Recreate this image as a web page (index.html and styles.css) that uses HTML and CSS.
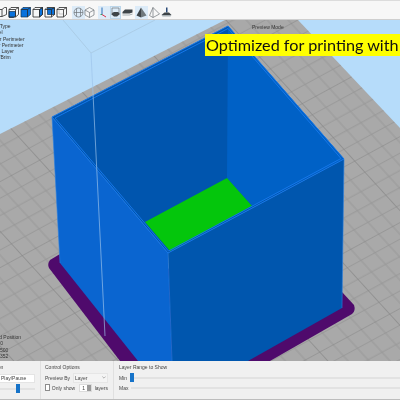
FILE: index.html
```html
<!DOCTYPE html>
<html>
<head>
    <meta charset="utf-8"/>
    <title>Preview Mode</title>
    <link rel="stylesheet" href="styles.css">
</head>
<body>
    <div class="app">
        <!-- toolbar -->
        <div class="toolbar">
            <svg class="tool-icon first" viewBox="0 0 11 11"><path class="line" d="M-4 2.500h10v7h-10zM6 2.500l2.500-2h2v7l-4.500 2"/></svg>
            <svg class="tool-icon" viewBox="0 0 11 11"><path class="face" d="M1 4.500h6.500v4.500l-2 1.500h-4.500z"/><path class="line" d="M1 2.500l2-2h7.500v7l-3 2.500h-6.500zM1 2.500h6.500v7.500M7.500 2.500l3-2"/></svg>
            <svg class="tool-icon" viewBox="0 0 11 11"><path class="face" d="M1 2.500l2-2h7.500v7l-3 2.500h-6.500z"/><path class="line" d="M1 2.500h6.500v7.500M7.500 2.500l3-2"/></svg>
            <svg class="tool-icon" viewBox="0 0 11 11"><path class="face" d="M7.500 2.500l3-2v7l-3 2.500z"/><path class="line" d="M1 2.500l2-2h7.500v7l-3 2.500h-6.500zM1 2.500h6.500v7.500M7.500 2.500l3-2"/></svg>
            <svg class="tool-icon" viewBox="0 0 11 11"><path class="face" d="M3.500 1h7v6.500h-7z"/><path class="line" d="M1 2.500l2-2h7.500v7l-3 2.500h-6.500zM1 2.500h6.500v7.500M7.500 2.500l3-2"/></svg>
            <svg class="tool-icon" viewBox="0 0 11 11"><path class="line" d="M1 2.500l2-2h7.500v7l-3 2.500h-6.500zM1 2.500h6.500v7.500M7.500 2.500l3-2"/><path class="shade" d="M3 1v6h4"/></svg>
            <span class="tool-box box-round"><svg class="tool-icon" viewBox="0 0 11 11"><circle class="thin" cx="5.500" cy="5.500" r="4.500"/><path class="thin" d="M3.500 1.500v8M7.500 1.500v8M1 5.500h9"/></svg></span>
            <svg class="tool-icon icon-wire" viewBox="0 0 11 11"><path class="thin" d="M5.500 .5l4.500 2.500v5l-4.500 2.500l-4.500-2.500v-5zM1 3l4.500 2.500l4.500-2.500M5.500 5.500v5"/></svg>
            <span class="tool-box box-axes"><svg class="tool-icon" viewBox="0 0 11 11"><path class="axis-b" d="M3 .5v7"/><path class="axis-g" d="M3 7.500h-1.500"/><path class="axis-r" d="M3 7.500l4 2.500"/></svg></span>
            <span class="tool-box box-framed"><svg class="tool-icon" viewBox="0 0 11 11"><path class="thin" d="M2 1h7v5h-7z"/><path class="dark" d="M1 7l3-2h4l2 2l-3 2.500h-3z"/></svg></span>
            <svg class="tool-icon" viewBox="0 0 11 11"><path class="dark" d="M.5 5l2.500-2.500h7.500v3l-3 1h-7z"/><path class="pale" d="M.5 7.500h7l3-1v1l-3 1h-7z"/></svg>
            <span class="tool-box box-pyramid"><svg class="tool-icon" viewBox="0 0 11 11"><path class="dark" d="M5 .5l-4.500 8l4.500 2z"/><path class="mid" d="M5 .5l5.500 8l-5.500 2z"/></svg></span>
            <svg class="tool-icon" viewBox="0 0 11 11"><path class="thin" d="M4 .5l-3.500 8l3.500 2l6.500-3.500zM4 .5v10"/></svg>
            <svg class="tool-icon" viewBox="0 0 11 11"><path class="navy" d="M5 .5h1.500v5h-1.500z"/><path class="dark" d="M3.500 5.500h4.500l2.500 2.500h-10z"/><path class="pale" d="M.5 8h10l-1 1.500h-8z"/></svg>
        </div>

        <!-- 3D view -->
        <div class="view">
            <svg class="scene" viewBox="0 19 400 341">
                <defs>
                    <pattern id="bed-grid" width="50" height="50" patternUnits="userSpaceOnUse" patternTransform="matrix(1.4 -.76 1.05 1.15 4 6)">
                        <path class="grid-minor" d="M10 0v50M20 0v50M30 0v50M40 0v50M0 10h50M0 20h50M0 30h50M0 40h50"/>
                        <path class="grid-major" d="M0 0v50M0 0h50"/>
                    </pattern>
                </defs>
                <polygon class="bed" points="0,133 225,19 298,19 400,127 400,360 0,360"/>
                <polygon class="bed-lines" points="0,133 225,19 298,19 400,127 400,360 0,360"/>
                <path class="envelope" d="M63 19L91 52L155 19"/>
                <path class="raft" d="M60 253L50 259Q47 263 49 267L120 360H270L352 313Q356 310 354 304L342 291Z"/>
                <polygon class="wall-in-left" points="52,116 228,25 344,158 168,252"/>
                <polygon class="wall-in-right" points="228,25 344,158 252,205 227,177"/>
                <polygon class="floor" points="227,177 252,205 170,250 145,221"/>
                <polygon class="wall-out-left" points="52,116 168,252 172,360 138,360 60,262"/>
                <polygon class="wall-out-right" points="168,252 344,158 342,307 248,360 172,360"/>
                <path class="rim" d="M52 116L228 25L344 158L168 252Z"/>
                <path class="rim-inner" d="M55 117L228 27.500L341 157.500L168.500 250Z"/>
                <path class="rim-edge" d="M52 116L60 262M168 252L172 360M344 158L342 307"/>
                <path class="envelope-front" d="M91 52L105 335"/>
            </svg>

            <div class="legend">
                <div>Line Type</div>
                <div>Travel</div>
                <div>Outer Perimeter</div>
                <div>Inner Perimeter</div>
                <div>Solid Layer</div>
                <div>Skirt/Brim</div>
            </div>
            <div class="position">
                <div>Head Position</div>
                <div>X: 0.0</div>
                <div>Y: 0.500</div>
                <div>Z: 0.352</div>
            </div>
            <div class="mode-label">Preview Mode</div>
            <div class="banner">Optimized for printing with</div>
        </div>

        <!-- bottom controls -->
        <div class="panel">
            <div class="group group-anim">
                <div class="group-title">Animation</div>
                <div class="play-box">Play/Pause</div>
                <div class="slider short"><span class="thumb thumb-speed"></span></div>
            </div>
            <div class="group group-control">
                <div class="group-title">Control Options</div>
                <div class="row">
                    <span>Preview By</span>
                    <span class="select">Layer<svg class="chevron" viewBox="0 0 6 4"><path d="M.5 .5l2.500 2.500l2.500-2.500"/></svg></span>
                </div>
                <div class="row">
                    <span class="check"></span>
                    <span>Only show</span>
                    <span class="spin">1<span class="spin-arrows"></span></span>
                    <span>layers</span>
                </div>
            </div>
            <div class="group group-range">
                <div class="group-title">Layer Range to Show</div>
                <div class="row">
                    <span class="range-label">Min</span>
                    <div class="slider"><span class="thumb"></span></div>
                </div>
                <div class="row">
                    <span class="range-label">Max</span>
                    <div class="slider"></div>
                </div>
            </div>
        </div>
    </div>
</body>
</html>
```

FILE: styles.css
```css
body {
    margin: 0;
    font-family: "Liberation Sans", Arial, sans-serif;
    font-size: 5px;
    color: #444;
    background-color: #f0f0f0;
}
.app {
    width: 400px;
    height: 400px;
    display: flex;
    flex-direction: column;
    overflow: hidden;
    background-color: #f0f0f0;
    filter: blur(.4px);
}

/* toolbar */
.toolbar {
    height: 17px;
    display: flex;
    align-items: center;
    gap: 1px;
    padding-top: 1px;
    background-color: #f7f7f7;
    border-top: 1px solid #dcdcdc;
    border-bottom: 1px solid #cfcfcf;
}
.tool-icon {
    width: 11px;
    height: 11px;
    flex: none;
    margin-top: 4px;
}
.tool-icon.first {
    margin-left: -4px;
}
.tool-icon.icon-wire {
    margin-left: -2px;
}
.tool-box {
    display: flex;
    align-items: center;
    height: 13px;
    margin-top: 4px;
    padding: 0 1px;
    background-color: #dcebf8;
}
.tool-box .tool-icon {
    margin: 0;
}
.box-round {
    margin-left: 4px;
}
.box-axes {
    margin-left: 2px;
}
.box-framed {
    margin-left: -2px;
    padding: 0;
    outline: 1px solid #bcd6ea;
    outline-offset: -1px;
}
.box-pyramid {
    margin-left: 1px;
}
.line, .thin, .shade, .axis-b, .axis-g, .axis-r {
    fill: none;
    stroke-linejoin: round;
}
.line {
    stroke: #2a2a2a;
    stroke-width: .8;
}
.thin {
    stroke: #6f7478;
    stroke-width: .7;
}
.shade {
    stroke: #9a9a9a;
    stroke-width: .5;
}
.face {
    fill: #0a72dc;
    stroke: #12314f;
    stroke-width: .7;
}
.dark { fill: #3e4448; }
.mid { fill: #6f787d; }
.pale { fill: #a8b0b4; }
.navy { fill: #2b4a78; }
.axis-b { stroke: #2a6fb8; stroke-width: 1; }
.axis-g { stroke: #2fa36b; stroke-width: 1; }
.axis-r { stroke: #d8324a; stroke-width: 1; }

/* 3D view */
.view {
    position: relative;
    height: 341px;
    flex: none;
    overflow: hidden;
    background-color: #b6dcfa;
}
.scene {
    display: block;
    width: 400px;
    height: 341px;
}
.bed { fill: #a9a9a9; }
.bed-lines { fill: url(#bed-grid); }
.grid-minor {
    fill: none;
    stroke: #979797;
    stroke-width: .6;
}
.grid-major {
    fill: none;
    stroke: #858585;
    stroke-width: .8;
}
.envelope {
    fill: none;
    stroke: #a6c6de;
    stroke-width: .7;
}
.envelope-front {
    fill: none;
    stroke: #9cc4ea;
    stroke-opacity: .75;
    stroke-width: .9;
}
.raft { fill: #4f0a6c; }
.wall-in-left { fill: #0055ae; }
.wall-in-right { fill: #0061c6; }
.floor { fill: #04c60c; }
.wall-out-left { fill: #0a65d0; }
.wall-out-right { fill: #0056ae; }
.rim, .rim-inner {
    fill: none;
    stroke: #1577ea;
    stroke-width: 1;
}
.rim-edge {
    fill: none;
    stroke: #2a7fe0;
    stroke-width: .6;
}

.legend, .position {
    position: absolute;
    line-height: 6.300px;
    color: #333;
}
.legend {
    top: 3px;
    left: -11px;
}
.position {
    top: 314px;
    left: -10px;
}
.mode-label {
    position: absolute;
    top: 4px;
    left: 252px;
    color: #333;
    line-height: 6px;
}
.banner {
    position: absolute;
    top: 14px;
    left: 205px;
    width: 195px;
    height: 22px;
    padding-left: 1px;
    box-sizing: border-box;
    background-color: #ffff00;
    color: #111;
    font-family: Lato, "Open Sans", sans-serif;
    font-size: 16.200px;
    line-height: 22px;
    white-space: nowrap;
}

/* bottom controls */
.panel {
    flex: 1;
    display: flex;
    border-bottom: 1px solid #bdbdbd;
    background-color: #f0f0f0;
}
.group {
    padding-top: 3px;
    box-sizing: border-box;
}
.group-title {
    line-height: 6px;
    margin-bottom: 3px;
}
.group-anim {
    width: 60px;
    margin-left: -19px;
    padding-right: 5px;
    border-right: 1px solid #e0e0e0;
}
.group-anim .group-title {
    margin-bottom: 4px;
}
.group-control {
    width: 73px;
    padding-left: 4px;
    padding-right: 5px;
    border-right: 1px solid #e0e0e0;
}
.group-range {
    flex: 1;
    padding-left: 5px;
}
.row {
    display: flex;
    align-items: center;
    gap: 2px;
    height: 9px;
    margin-bottom: 1px;
    white-space: nowrap;
}
.play-box {
    height: 7px;
    line-height: 7px;
    padding-left: 19px;
    background-color: #fff;
    border: 1px solid #e4e4e4;
    margin-bottom: 3px;
}
.select {
    flex: 1;
    display: flex;
    justify-content: space-between;
    align-items: center;
    height: 8px;
    margin-left: 1px;
    padding: 0 1px;
    background-color: #f4f4f4;
    border: 1px solid #e6e6e6;
}
.chevron {
    width: 4px;
    height: 3px;
    fill: none;
    stroke: #666;
    stroke-width: .7;
}
.check {
    width: 5px;
    height: 5px;
    background-color: #fff;
    border: 1px solid #8c8c8c;
}
.spin {
    display: flex;
    justify-content: space-between;
    align-items: center;
    width: 15px;
    height: 6px;
    margin: 0 1px 0 2px;
    padding-left: 2px;
    background-color: #fff;
    border: 1px solid #dcdcdc;
}
.spin-arrows {
    width: 4px;
    height: 6px;
    background-color: #9a9a9a;
}
.range-label {
    width: 10px;
}
.slider {
    position: relative;
    flex: 1;
    height: 2px;
    background-color: #e2e2e2;
}
.slider.short {
    margin-top: 5px;
}
.thumb {
    position: absolute;
    left: -1px;
    top: -4px;
    width: 4px;
    height: 9px;
    background-color: #1673c9;
}
.thumb.thumb-speed {
    left: 35px;
}
```
